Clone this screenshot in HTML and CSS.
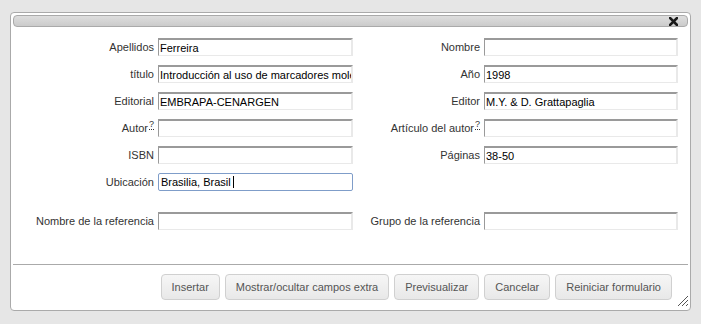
FILE: index.html
```html
<!DOCTYPE html>
<html lang="es">
<head>
    <meta charset="UTF-8" />
    <title>Insertar referencia</title>
    <link rel="stylesheet" href="styles.css">
</head>
<body>
    <div class="dialog">
        <div class="titlebar">
            <span class="close">
                <svg width="9" height="9" viewBox="0 0 9 9"><path d="M1 1L8 8M8 1L1 8" stroke="#1a1a1a" stroke-width="2.6" stroke-linecap="square"/></svg>
            </span>
        </div>

        <form class="fields">
            <div class="row">
                <label>Apellidos</label><input type="text" value="Ferreira">
                <label>Nombre</label><input type="text">
            </div>
            <div class="row">
                <label>título</label><input type="text" value="Introducción al uso de marcadores moleculares">
                <label>Año</label><input type="text" value="1998">
            </div>
            <div class="row">
                <label>Editorial</label><input type="text" value="EMBRAPA-CENARGEN">
                <label>Editor</label><input type="text" value="M.Y. &amp; D. Grattapaglia">
            </div>
            <div class="row">
                <label>Autor<sup class="hint">?</sup></label><input type="text">
                <label>Artículo del autor<sup class="hint">?</sup></label><input type="text">
            </div>
            <div class="row">
                <label>ISBN</label><input type="text">
                <label>Páginas</label><input type="text" value="38-50">
            </div>
            <div class="row">
                <label>Ubicación</label>
                <span class="focus-wrap"><input type="text" class="focused" value="Brasilia, Brasil"><span class="caret"></span></span>
            </div>
            <div class="row extra">
                <label>Nombre de la referencia</label><input type="text">
                <label>Grupo de la referencia</label><input type="text">
            </div>
        </form>

        <div class="buttonpane">
            <button type="button">Insertar</button>
            <button type="button">Mostrar/ocultar campos extra</button>
            <button type="button">Previsualizar</button>
            <button type="button">Cancelar</button>
            <button type="button">Reiniciar formulario</button>
        </div>

        <span class="grip">
            <svg width="12" height="12" viewBox="0 0 12 12"><path d="M11 1L1 11M11 5L5 11M11 9L9 11" stroke="#555" stroke-width="1"/></svg>
        </span>
    </div>
</body>
</html>
```

FILE: styles.css
```css
*{
    margin: 0;
    padding: 0;
    box-sizing: border-box;
}
html,body{
    width: 100%;
    height: 100%;
}
body{
    background-color: #e6e6e6;
    font-family: "Liberation Sans", Arial, sans-serif;
    font-size: 11px;
    color: #333;
}

.dialog{
    position: relative;
    width: 681px;
    height: 299px;
    margin: 12px 0 0 10px;
    background-color: #fff;
    border: 1px solid #aaa;
    border-radius: 4px;
}

.titlebar{
    display: flex;
    justify-content: flex-end;
    align-items: center;
    height: 12px;
    margin: 2px 2px 0 2px;
    padding-right: 9px;
    border: 1px solid #aaa;
    border-radius: 4px;
    background: linear-gradient(#dedede, #cbcbcb);
}
.close{
    display: flex;
    margin-top: 1px;
}

.fields{
    display: flex;
    flex-direction: column;
    gap: 9px;
    padding-top: 11px;
}
.row{
    display: grid;
    grid-template-columns: 143px 195px 123px 194px;
    column-gap: 4px;
    align-items: center;
}
.row.extra{
    margin-top: 12px;
}
.row label{
    text-align: right;
    white-space: nowrap;
}
.hint{
    font-size: 9px;
    line-height: 0;
    vertical-align: 5px;
    margin-left: 1px;
    border-bottom: 1px dotted #333;
}

input{
    width: 100%;
    height: 18px;
    padding: 0 0 0 1px;
    font-family: "Liberation Sans", Arial, sans-serif;
    font-size: 11px;
    color: #000;
    background-color: #fff;
    border-style: solid;
    border-width: 2px 2px 1px 1px;
    border-color: #9a9a9a #e9e9e9 #e9e9e9 #9a9a9a;
    outline: none;
}
.focus-wrap{
    position: relative;
    display: block;
}
input.focused{
    border: 1px solid #7f9dc9;
    border-radius: 2px;
    padding: 0 2px;
}
.caret{
    position: absolute;
    left: 75px;
    top: 3px;
    width: 1px;
    height: 12px;
    background-color: #000;
}

.buttonpane{
    display: flex;
    justify-content: flex-end;
    gap: 5px;
    margin: 34px 2px 0 2px;
    padding: 9px 16px 0 0;
    border-top: 1px solid #aaa;
}
.buttonpane button{
    height: 26px;
    padding: 0 10px;
    font-family: "Liberation Sans", Arial, sans-serif;
    font-size: 11px;
    color: #555;
    background: linear-gradient(#f6f6f6, #e8e8e8);
    border: 1px solid #d0d0d0;
    border-radius: 4px;
}

.grip{
    position: absolute;
    right: 1px;
    bottom: 3px;
    display: flex;
}
```
